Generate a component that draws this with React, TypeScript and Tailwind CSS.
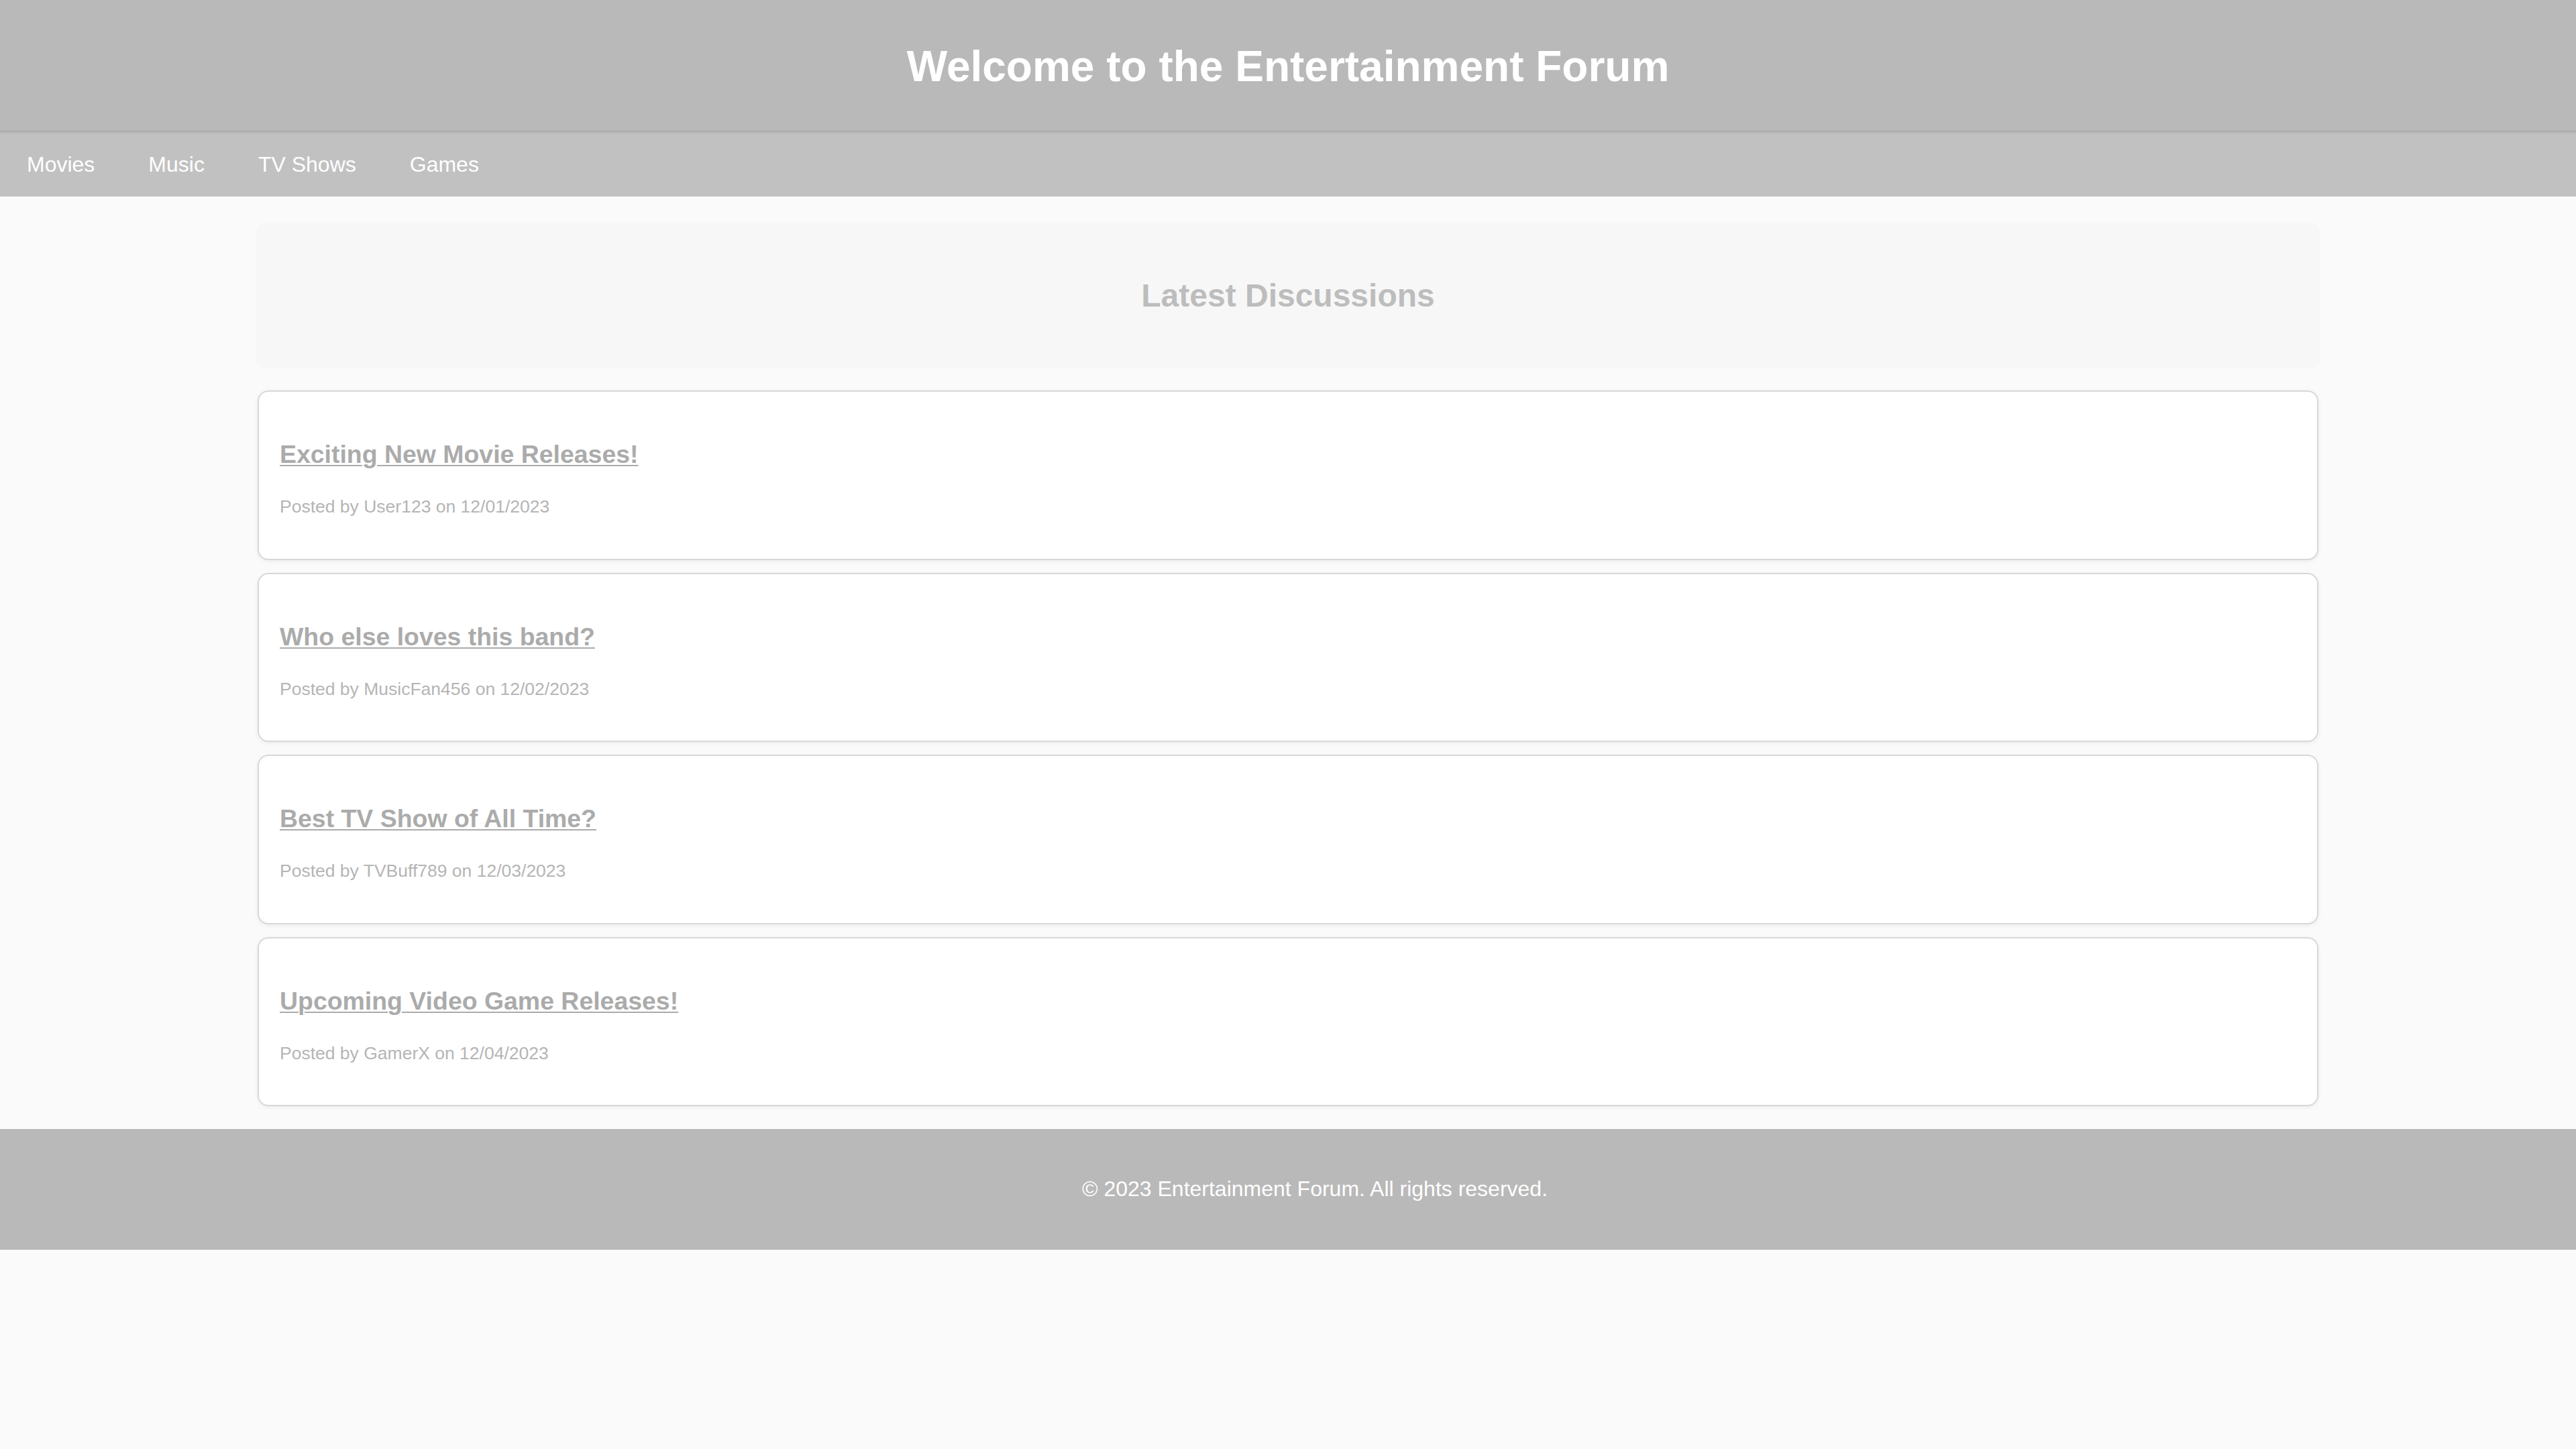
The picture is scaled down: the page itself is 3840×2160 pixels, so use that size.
import React from "react";

const posts = [
  { title: "Exciting New Movie Releases!", author: "User123", date: "12/01/2023" },
  { title: "Who else loves this band?", author: "MusicFan456", date: "12/02/2023" },
  { title: "Best TV Show of All Time?", author: "TVBuff789", date: "12/03/2023" },
  { title: "Upcoming Video Game Releases!", author: "GamerX", date: "12/04/2023" },
];

const navItems = ["Movies", "Music", "TV Shows", "Games"];

export default function App() {
  return (
    <div
      className="min-h-[2160px] w-full bg-[#fafafa]"
      style={{ fontFamily: '"Liberation Sans", Arial, Helvetica, sans-serif' }}
    >
      <header className="box-border h-[196px] border-b border-[#9e9e9e] bg-[#b9b9b9] pt-[63px] text-center">
        <h1 className="m-0 text-[64px] font-bold leading-[73.6px] text-white">
          Welcome to the Entertainment Forum
        </h1>
      </header>
      <nav className="box-border flex h-[97px] border-t-4 border-[#bababa] bg-[#c1c1c1] pt-[27px]">
        {navItems.map((n) => (
          <a key={n} className="px-[40px] text-[32px] leading-[36.8px] text-white no-underline">
            {n}
          </a>
        ))}
      </nav>
      <main className="mx-auto flex w-[3072px] flex-col pt-[40px] pb-[34px]">
        <section className="mb-[36px] rounded-[10px] bg-[#f7f7f7] pt-[80px] pb-[78px] text-center shadow-[0_1px_4px_rgba(0,0,0,0.04)]">
          <h2 className="m-0 text-[48px] font-bold leading-[55px] text-[#bdbdbd]">Latest Discussions</h2>
        </section>
        <div className="flex flex-col gap-[19px]">
          {posts.map((p) => (
            <article
              key={p.title}
              className="rounded-[16px] border-2 border-[#d8d8d8] bg-white px-[31px] pt-[72px] pb-[62px] shadow-[0_2px_6px_rgba(0,0,0,0.06)]"
            >
              <h3 className="m-0 text-[37.44px] font-bold leading-[43px] text-[#ababab] underline decoration-[2px] underline-offset-[3px]">
                {p.title}
              </h3>
              <p className="m-0 mt-[41px] text-[26.5px] leading-[30.6px] text-[#b5b5b5]">
                Posted by {p.author} on {p.date}
              </p>
            </article>
          ))}
        </div>
      </main>
      <footer className="box-border h-[180px] bg-[#b9b9b9] pl-[80px] pt-[71px] text-center">
        <p className="m-0 text-[32px] leading-[36.8px] text-white">
          © 2023 Entertainment Forum. All rights reserved.
        </p>
      </footer>
    </div>
  );
}
